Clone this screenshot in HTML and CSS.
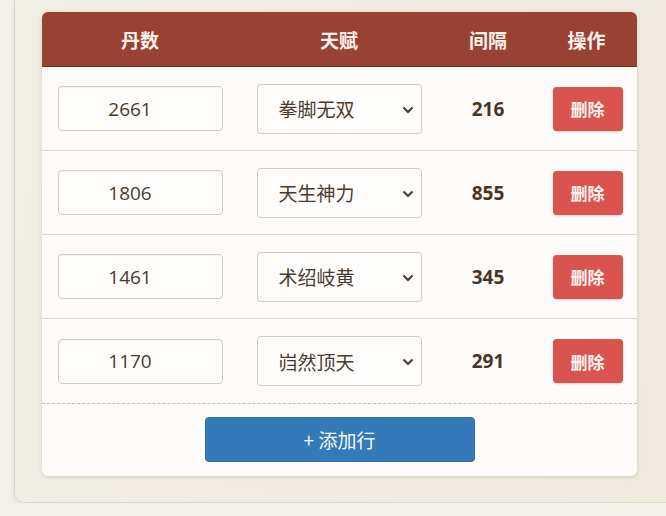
FILE: index.html
```html
<!DOCTYPE html>
<html lang="zh">
<head>
    <meta charset="UTF-8">
    <link rel="stylesheet" href="styles.css">
    <title>丹数</title>
</head>
<body>
<div class="panneau">
    <div class="carte">
        <div class="ligne entete">
            <div>丹数</div>
            <div>天赋</div>
            <div>间隔</div>
            <div>操作</div>
        </div>

        <div class="ligne">
            <div><input class="champ" type="text" value="2661"></div>
            <div class="choix">
                <select><option>拳脚无双</option></select>
                <svg class="fleche" width="12" height="8" viewBox="0 0 12 8"><path d="M1.5 1.5 L6 6 L10.5 1.5" fill="none" stroke="#4a3a2e" stroke-width="2"/></svg>
            </div>
            <div class="intervalle">216</div>
            <div><button class="supprimer">删除</button></div>
        </div>

        <div class="ligne">
            <div><input class="champ" type="text" value="1806"></div>
            <div class="choix">
                <select><option>天生神力</option></select>
                <svg class="fleche" width="12" height="8" viewBox="0 0 12 8"><path d="M1.5 1.5 L6 6 L10.5 1.5" fill="none" stroke="#4a3a2e" stroke-width="2"/></svg>
            </div>
            <div class="intervalle">855</div>
            <div><button class="supprimer">删除</button></div>
        </div>

        <div class="ligne">
            <div><input class="champ" type="text" value="1461"></div>
            <div class="choix">
                <select><option>术绍岐黄</option></select>
                <svg class="fleche" width="12" height="8" viewBox="0 0 12 8"><path d="M1.5 1.5 L6 6 L10.5 1.5" fill="none" stroke="#4a3a2e" stroke-width="2"/></svg>
            </div>
            <div class="intervalle">345</div>
            <div><button class="supprimer">删除</button></div>
        </div>

        <div class="ligne derniere">
            <div><input class="champ" type="text" value="1170"></div>
            <div class="choix">
                <select><option>岿然顶天</option></select>
                <svg class="fleche" width="12" height="8" viewBox="0 0 12 8"><path d="M1.5 1.5 L6 6 L10.5 1.5" fill="none" stroke="#4a3a2e" stroke-width="2"/></svg>
            </div>
            <div class="intervalle">291</div>
            <div><button class="supprimer">删除</button></div>
        </div>

        <div class="pied">
            <button class="ajouter">+ 添加行</button>
        </div>
    </div>
</div>
</body>
</html>
```

FILE: styles.css
```css
body {
    margin: 0;
    background-color: #f3f0ea;
    font-family: "Open Sans", "Noto Sans CJK SC", sans-serif;
    color: #4a3a2e;
}

.panneau {
    margin-left: 14px;
    margin-right: -30px;
    padding: 12px 0 26px 27px;
    background: linear-gradient(100deg, #f1eee6 0%, #efe9de 100%);
    border-left: 1px solid #ddd6ca;
    border-bottom: 1px solid #ddd6ca;
    border-bottom-left-radius: 10px;
    box-shadow: 0 2px 6px rgba(120, 100, 70, 0.12);
}

.carte {
    width: 595px;
    background-color: #fdfcfa;
    border-radius: 6px;
    overflow: hidden;
    box-shadow: 0 1px 4px rgba(90, 70, 40, 0.18);
}

.ligne {
    display: grid;
    grid-template-columns: 196px 202px 96px 101px;
    align-items: center;
    height: 83px;
    border-bottom: 1px solid #ddd6cc;
}

.ligne > div {
    display: flex;
    justify-content: center;
    align-items: center;
}

.entete {
    height: 54px;
    background-color: #974232;
    border-bottom: 1px solid #7a2f22;
    color: #fbf1ea;
    font-family: "Noto Sans CJK SC", sans-serif;
    font-weight: 700;
    font-size: 19px;
}

.derniere {
    height: 84px;
    border-bottom: 1px dashed #c9c0b4;
}

.champ {
    box-sizing: border-box;
    width: 165px;
    height: 45px;
    padding: 0 20px 0 0;
    border: 1px solid #d3cbc0;
    border-radius: 4px;
    background-color: #fefdfc;
    font-family: "Open Sans", "Noto Sans CJK SC", sans-serif;
    font-size: 19px;
    color: #4a3a2e;
    text-align: center;
    box-shadow: inset 0 1px 2px rgba(0, 0, 0, 0.04);
}

.choix {
    position: relative;
}

.choix select {
    box-sizing: border-box;
    width: 165px;
    height: 50px;
    padding-left: 21px;
    border: 1px solid #d3cbc0;
    border-radius: 4px;
    background-color: #fefdfc;
    font-family: "Noto Sans CJK SC", sans-serif;
    font-size: 19px;
    color: #4a3a2e;
    appearance: none;
    -webkit-appearance: none;
}

.fleche {
    position: absolute;
    left: 164px;
    top: 22px;
    pointer-events: none;
}

.intervalle {
    font-family: "Open Sans", sans-serif;
    font-weight: 700;
    font-size: 19px;
    color: #4a3424;
}

.supprimer {
    width: 70px;
    height: 44px;
    margin-left: 2px;
    border: none;
    border-radius: 4px;
    background-color: #d9534f;
    color: #fff5f2;
    font-family: "Noto Sans CJK SC", sans-serif;
    font-weight: 700;
    font-size: 17px;
    box-shadow: 0 1px 2px rgba(150, 40, 30, 0.25);
}

.pied {
    display: flex;
    justify-content: center;
    padding: 13px 0 14px 0;
}

.ajouter {
    width: 270px;
    height: 45px;
    border: 1px solid #2e6ca6;
    border-radius: 4px;
    background-color: #3479b8;
    color: #f4f8fc;
    font-family: "Noto Sans CJK SC", sans-serif;
    font-size: 19px;
}
```
